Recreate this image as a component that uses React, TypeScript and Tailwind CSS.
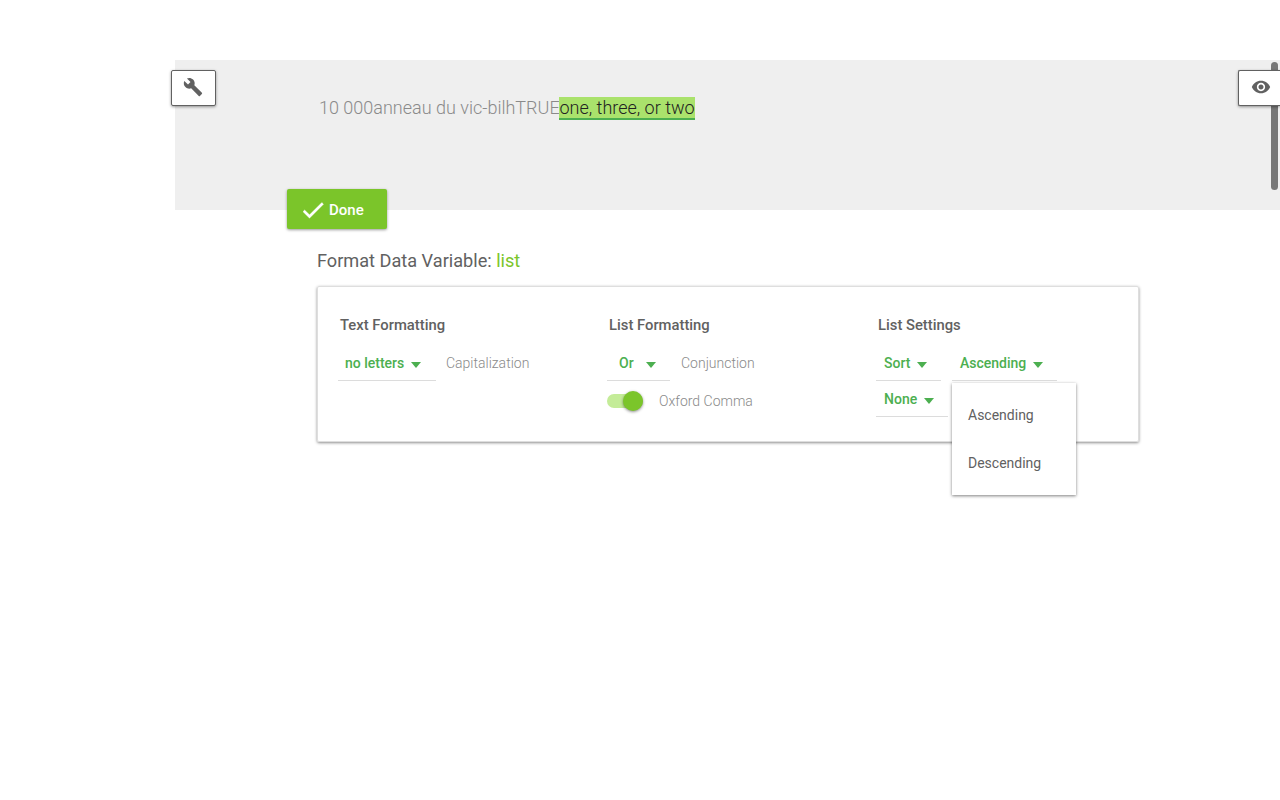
import type { ReactNode } from "react";

function WrenchIcon() {
  return (
    <svg viewBox="0 0 24 24" className="mr-px size-5 fill-[#616161]">
      <path d="M22.7 19l-9.1-9.1c.9-2.3.4-5-1.5-6.9-2-2-5-2.4-7.4-1.3L9 6 6 9 1.6 4.7C.4 7.1.9 10.1 2.9 12.1c1.9 1.9 4.6 2.4 6.9 1.5l9.1 9.1c.4.4 1 .4 1.4 0l2.3-2.3c.5-.4.5-1.1.1-1.4z" />
    </svg>
  );
}

function EyeIcon() {
  return (
    <svg viewBox="0 0 24 24" className="size-5 fill-[#616161]">
      <path d="M12 4.5C7 4.5 2.73 7.61 1 12c1.73 4.39 6 7.5 11 7.5s9.27-3.11 11-7.5c-1.73-4.39-6-7.5-11-7.5zM12 17c-2.76 0-5-2.24-5-5s2.24-5 5-5 5 2.24 5 5-2.24 5-5 5zm0-8c-1.66 0-3 1.34-3 3s1.34 3 3 3 3-1.34 3-3-1.34-3-3-3z" />
    </svg>
  );
}

function CheckIcon() {
  return (
    <svg viewBox="0 0 24 24" className="mt-px size-7 shrink-0 fill-white stroke-white stroke-[0.3]">
      <path d="M9 16.17L4.83 12l-1.42 1.41L9 19 21 7l-1.41-1.41z" />
    </svg>
  );
}

function Caret() {
  return (
    <svg viewBox="0 0 10 6" className="mt-1 h-1.5 w-2.5 shrink-0 fill-[#4caf50]">
      <path d="M0 0h10L5 6z" />
    </svg>
  );
}

function Select({ label, className }: { label: string; className: string }) {
  return (
    <button
      className={`flex h-[35px] items-center border-b border-[#dcdcdc] text-sm font-medium whitespace-nowrap text-[#4caf50] ${className}`}
    >
      <span>{label}</span>
      <Caret />
    </button>
  );
}

function Column({ title, className, children }: { title: string; className: string; children: ReactNode }) {
  return (
    <section className={className}>
      <h2 className="pl-0.5 text-[14.8px] leading-5 font-medium text-[#616161]">{title}</h2>
      {children}
    </section>
  );
}

export default function App() {
  return (
    <main className="h-[800px] w-full overflow-hidden bg-white pt-[60px] font-['Roboto',sans-serif]">
      <header className="relative ml-[175px] h-[150px] bg-[#efefef] pt-9 pl-36">
        <p className="text-lg leading-6 font-light whitespace-nowrap text-[#8a8a8a]">
          10 000anneau du vic-bilhTRUE
          <mark className="border-b-2 border-[#4caf50] bg-[#aae26c] text-[#212121]">one, three, or two</mark>
        </p>
        <div className="absolute top-0.5 right-0.5 h-32 w-[7px] rounded-full bg-[#777777]" />
        <button className="absolute top-2.5 -left-1 flex h-9 w-[45px] items-center justify-center rounded-xs border border-[#616161] bg-white pb-0.5 shadow-[0_1px_3px_rgba(0,0,0,0.4)]">
          <WrenchIcon />
        </button>
        <button className="absolute top-2.5 right-0 flex h-9 w-[42px] items-center rounded-l-xs border border-r-0 border-[#616161] bg-white pb-0.5 pl-[11.5px] shadow-[0_1px_3px_rgba(0,0,0,0.4)]">
          <EyeIcon />
        </button>
        <button className="absolute top-[129px] left-28 flex h-10 w-[100px] items-center rounded-xs bg-[#7bc52a] pl-3 text-[15px] font-medium text-white shadow-[0_1px_3px_rgba(0,0,0,0.4)]">
          <CheckIcon />
          <span className="ml-0.5 pt-0.5">Done</span>
        </button>
      </header>

      <div className="ml-[317px] w-[822px] pt-[39px]">
        <h1 className="text-[18.15px] leading-6 text-[#616161]">
          Format Data Variable: <span className="text-[#7bc52a]">list</span>
        </h1>
        <div className="mt-[13px] flex h-[156px] rounded-xs border border-[#dedede] pt-7 pl-5 shadow-[0_1px_3px_rgba(0,0,0,0.45)]">
          <Column title="Text Formatting" className="w-[269px]">
            <div className="mt-[11px] flex">
              <Select label="no letters" className="w-[98px] gap-[7px] pl-[7px]" />
              <span className="ml-[10px] text-sm leading-[35px] font-light text-[#8a8a8a]">Capitalization</span>
            </div>
          </Column>
          <Column title="List Formatting" className="w-[269px]">
            <div className="mt-[11px] flex">
              <Select label="Or" className="w-[63px] gap-3 pl-3" />
              <span className="ml-[11px] text-sm leading-[35px] font-light text-[#8a8a8a]">Conjunction</span>
            </div>
            <div className="mt-[10px] flex h-5 items-center">
              <div className="flex h-3.5 w-9 items-center justify-end rounded-full bg-[#c4ec98]">
                <div className="size-5 rounded-full bg-[#7bc52a] shadow-[0_1px_3px_rgba(0,0,0,0.45)]" />
              </div>
              <span className="ml-4 text-sm leading-5 font-light text-[#8a8a8a]">Oxford Comma</span>
            </div>
          </Column>
          <Column title="List Settings" className="flex-1">
            <div className="mt-[11px] flex gap-[11px]">
              <Select label="Sort" className="w-[65px] gap-[7px] pl-2" />
              <div className="relative">
                <Select label="Ascending" className="w-[105px] gap-[7px] pl-2" />
                <ul className="absolute top-[37px] left-0 flex h-28 w-[124px] flex-col bg-white py-2 text-sm text-[#616161] shadow-[0_1px_3px_rgba(0,0,0,0.5)]">
                  <li className="flex h-12 items-center pl-4">Ascending</li>
                  <li className="flex h-12 items-center pl-4">Descending</li>
                </ul>
              </div>
            </div>
            <div className="mt-px">
              <Select label="None" className="w-[72px] gap-[7px] pl-2" />
            </div>
          </Column>
        </div>
      </div>
    </main>
  );
}
